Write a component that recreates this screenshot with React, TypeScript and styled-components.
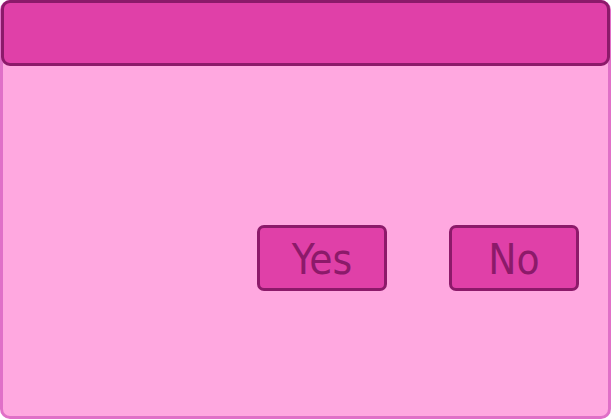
import styled, { createGlobalStyle } from 'styled-components'

const GlobalStyle = createGlobalStyle`
  html, body {
    margin: 0;
    padding: 0;
    background: #ffffff;
    font-family: 'DejaVu Sans', Verdana, sans-serif;
  }
`

const Window = styled.div`
  box-sizing: border-box;
  width: 611px;
  height: 419px;
  border: 3px solid #e070c8;
  border-radius: 10px;
  background: #ffa8e0;
  display: flex;
  flex-direction: column;
`

const TitleBar = styled.div`
  box-sizing: border-box;
  height: 66px;
  margin: -3px -2px 0;
  background: #e040a8;
  border: 3px solid #8c1a6a;
  border-radius: 9px;
`

const ButtonRow = styled.div`
  display: flex;
  justify-content: flex-end;
  gap: 62px;
  margin-top: 159px;
  padding-right: 29px;
`

const Button = styled.button`
  box-sizing: border-box;
  width: 130px;
  height: 66px;
  padding: 3px 0 0;
  background: #e040a8;
  border: 3px solid #8c1a6a;
  border-radius: 7px;
  color: #8c1a6a;
  font-family: 'DejaVu Sans Condensed', 'DejaVu Sans', Verdana, sans-serif;
  font-stretch: condensed;
  font-size: 42px;
  line-height: 1;
  display: flex;
  align-items: center;
  justify-content: center;
`

export default function App() {
  return (
    <>
      <GlobalStyle />
      <Window>
        <TitleBar />
        <ButtonRow>
          <Button>Yes</Button>
          <Button>No</Button>
        </ButtonRow>
      </Window>
    </>
  )
}
